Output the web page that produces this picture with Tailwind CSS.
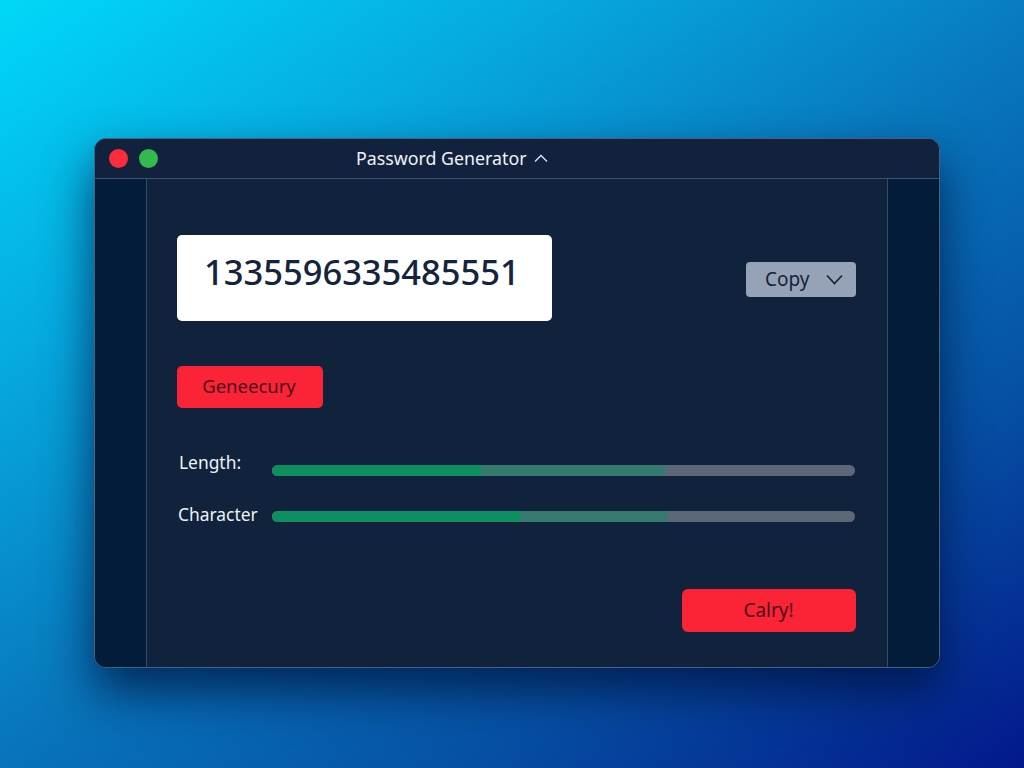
<!DOCTYPE html>
<html lang="en">
<head>
  <meta charset="UTF-8" />
  <title>Password Generator</title>
  <script src="https://cdn.jsdelivr.net/npm/@tailwindcss/browser@4"></script>
</head>
<body class="w-[1024px] h-[768px] overflow-hidden bg-[linear-gradient(146deg,#00d8f8_0%,#06a8de_26%,#0878bc_50%,#0650a4_74%,#03188a_100%)] font-['Noto_Sans',sans-serif] pt-[138px] pl-[94px]">

  <!-- window -->
  <div class="w-[846px] h-[530px] flex flex-col rounded-[12px] overflow-hidden border border-[#47627f] bg-[#10223c] shadow-[0_24px_48px_rgba(2,18,60,0.75)]">

    <!-- title bar -->
    <div class="h-[40px] shrink-0 flex items-center pl-[14px] gap-[11px] border-b border-[#3b526f] bg-[#12223e]">
      <span class="w-[19px] h-[19px] rounded-full bg-[#fb2d3c]"></span>
      <span class="w-[19px] h-[19px] rounded-full bg-[#35b84e]"></span>
      <div class="flex items-center gap-[7px] ml-[187px] text-[#eef3f8] text-[17.8px] leading-none">
        <span>Password Generator</span>
        <svg class="w-[14px] h-[9px]" viewBox="0 0 14 9" fill="none" stroke="#dfe7ef" stroke-width="1.3"><path d="M1 7.5 7 1.5l6 6" /></svg>
      </div>
    </div>

    <div class="flex-1 flex min-h-0">
      <div class="w-[51px] shrink-0 bg-[#021c3a] border-r border-[#344b69] box-content"></div>

      <!-- main -->
      <div class="flex-1 flex flex-col pt-[56px] pl-[30px] pr-[31px] pb-[35px]">
        <div class="flex items-center justify-between">
          <div class="w-[375px] h-[86px] rounded-[5px] bg-white flex items-center pl-[27px] pb-[11px] text-[#14243c] text-[34.5px] font-medium leading-none">1335596335485551</div>
          <button class="w-[110px] h-[35px] mt-[3px] rounded-[4px] bg-[#96a3b6] flex items-center pl-[19px] gap-[16px] text-[#14233c] text-[19px] leading-none">
            <span>Copy</span>
            <svg class="w-[17px] h-[11px]" viewBox="0 0 17 11" fill="none" stroke="#14233c" stroke-width="1.7"><path d="M1 1.5 8.5 9.5 16 1.5" /></svg>
          </button>
        </div>

        <button class="w-[146px] h-[42px] mt-[45px] pb-[2px] pr-[2px] rounded-[5px] bg-[#fb2336] text-[#4a0f1c] text-[18.5px] leading-none">Geneecury</button>

        <div class="flex items-center mt-[50px] h-[25px] text-[#eef3f8] text-[17.4px] leading-none">
          <span class="w-[95px] pl-[2px] mb-[15px]">Length:</span>
          <div class="flex-1 mr-[1px] h-[11px] rounded-full bg-[#5c6878] overflow-hidden flex">
            <div class="w-[209px] bg-[#0e8f5f]"></div>
            <div class="w-[184px] bg-[#35796f]"></div>
          </div>
        </div>

        <div class="flex items-center mt-[21px] h-[25px] text-[#eef3f8] text-[17.4px] leading-none">
          <span class="w-[95px] pl-[1px] mb-[3px]">Character</span>
          <div class="flex-1 mr-[1px] h-[11px] rounded-full bg-[#5c6878] overflow-hidden flex">
            <div class="w-[248px] bg-[#0e8f5f]"></div>
            <div class="w-[148px] bg-[#35796f]"></div>
          </div>
        </div>

        <div class="mt-auto flex justify-end">
          <button class="w-[174px] h-[43px] pr-[1px] rounded-[6px] bg-[#fb2336] text-[#4a0f1c] text-[19px] leading-none">Calry!</button>
        </div>
      </div>

      <div class="w-[51px] shrink-0 bg-[#021c3a] border-l border-[#344b69] box-content"></div>
    </div>
  </div>
</body>
</html>
